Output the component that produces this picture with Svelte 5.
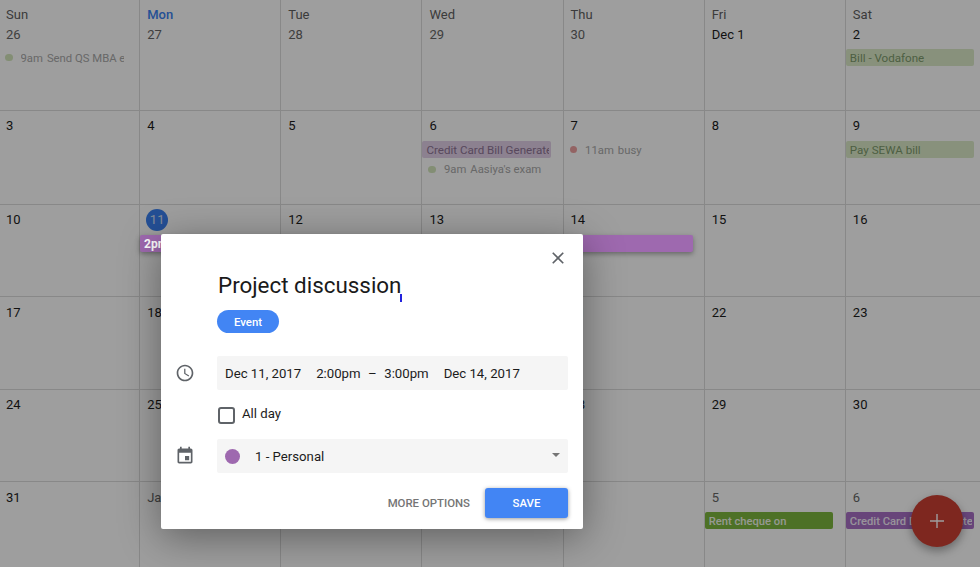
<script>
	const weekdays = ['Sun', 'Mon', 'Tue', 'Wed', 'Thu', 'Fri', 'Sat'];

	// label, muted (other month), events
	const weeks = [
		[
			{ n: '26', muted: true, events: [{ kind: 'dot', color: 'green', time: '9am', text: 'Send QS MBA essay' }] },
			{ n: '27', muted: true },
			{ n: '28', muted: true },
			{ n: '29', muted: true },
			{ n: '30', muted: true },
			{ n: 'Dec 1' },
			{ n: '2', events: [{ kind: 'chip', color: 'green', text: 'Bill - Vodafone' }] }
		],
		[
			{ n: '3' },
			{ n: '4' },
			{ n: '5' },
			{ n: '6', events: [
				{ kind: 'chip', color: 'purple', text: 'Credit Card Bill Generated' },
				{ kind: 'dot', color: 'green', time: '9am', text: "Aasiya's exam" }
			] },
			{ n: '7', events: [{ kind: 'dot', color: 'red', time: '11am', text: 'busy' }] },
			{ n: '8' },
			{ n: '9', events: [{ kind: 'chip', color: 'green', text: 'Pay SEWA bill' }] }
		],
		[
			{ n: '10' },
			{ n: '11', today: true },
			{ n: '12' },
			{ n: '13' },
			{ n: '14' },
			{ n: '15' },
			{ n: '16' }
		],
		[
			{ n: '17' },
			{ n: '18' },
			{ n: '19' },
			{ n: '20' },
			{ n: '21' },
			{ n: '22' },
			{ n: '23' }
		],
		[
			{ n: '24' },
			{ n: '25' },
			{ n: '26' },
			{ n: '27' },
			{ n: '28' },
			{ n: '29' },
			{ n: '30' }
		],
		[
			{ n: '31' },
			{ n: 'Jan 1', muted: true },
			{ n: '2', muted: true },
			{ n: '3', muted: true },
			{ n: '4', muted: true },
			{ n: '5', muted: true, events: [{ kind: 'chip', color: 'solid-green', text: 'Rent cheque on' }] },
			{ n: '6', muted: true, events: [{ kind: 'chip', color: 'solid-purple', text: 'Credit Card Bill Generated' }] }
		]
	];
</script>

<div class="page">
	<div class="month">
		{#each weeks as week, w}
			<div class="week" class:first={w === 0}>
				{#each week as day, d}
					<div class="day">
						{#if w === 0}
							<div class="weekday" class:current={d === 1}>{weekdays[d]}</div>
						{/if}
						<div class="date" class:muted={day.muted}>
							{#if day.today}
								<span class="today">{day.n}</span>
							{:else}
								{day.n}
							{/if}
						</div>
						{#each day.events ?? [] as ev}
							{#if ev.kind === 'chip'}
								<div class="chip {ev.color}"><span>{ev.text}</span></div>
							{:else}
								<div class="dot-event">
									<i class="dot {ev.color}"></i>
									<span><b>{ev.time}</b>{ev.text}</span>
								</div>
							{/if}
						{/each}
					</div>
				{/each}
			</div>
		{/each}
	</div>

	<button class="fab" aria-label="Create">
		<svg viewBox="0 0 24 24" width="24" height="24"><path d="M19 12.7h-6.3V19h-1.4v-6.3H5v-1.4h6.3V5h1.4v6.3H19v1.4z" /></svg>
	</button>

	<div class="scrim"></div>

	<div class="dragged">2pm Project discussion</div>

	<div class="modal">
		<button class="close" aria-label="Close">
			<svg viewBox="0 0 24 24" width="20" height="20"><path d="M19 6.41L17.59 5 12 10.59 6.41 5 5 6.41 10.59 12 5 17.59 6.41 19 12 13.41 17.59 19 19 17.59 13.41 12z" /></svg>
		</button>

		<div class="title"><span>Project discussion</span><i class="caret"></i></div>
		<div class="pill">Event</div>

		<div class="row">
			<svg class="icon" viewBox="0 0 24 24" width="20" height="20"><path d="M11.99 2C6.47 2 2 6.48 2 12s4.47 10 9.99 10C17.52 22 22 17.52 22 12S17.52 2 11.99 2zM12 20c-4.42 0-8-3.58-8-8s3.58-8 8-8 8 3.58 8 8-3.58 8-8 8zm.5-13H11v6l5.25 3.15.75-1.23-4.5-2.67z" /></svg>
			<div class="field when">
				<span>Dec 11, 2017</span>
				<span class="range"><span>2:00pm</span><span>–</span><span>3:00pm</span></span>
				<span>Dec 14, 2017</span>
			</div>
		</div>

		<label class="allday">
			<span class="box"></span>
			<span class="allday-text">All day</span>
		</label>

		<div class="row">
			<svg class="icon" viewBox="0 0 24 24" width="20" height="20"><path d="M17 12h-5v5h5v-5zM16 1v2H8V1H6v2H5c-1.11 0-1.99.9-1.99 2L3 19c0 1.1.89 2 2 2h14c1.1 0 2-.9 2-2V5c0-1.1-.9-2-2-2h-1V1h-2zm3 18H5V8h14v11z" /></svg>
			<div class="field cal">
				<i class="cal-dot"></i>
				<span class="cal-name">1 - Personal</span>
				<i class="arrow"></i>
			</div>
		</div>

		<div class="actions">
			<button class="more">MORE OPTIONS</button>
			<button class="save">SAVE</button>
		</div>
	</div>
</div>

<style>
	:global(body) {
		margin: 0;
		background: #fff;
	}
	.page {
		position: relative;
		width: 980px;
		height: 567px;
		overflow: hidden;
		font-family: Roboto, "Liberation Sans", sans-serif;
		color: #1c1c1c;
	}
	.month {
		margin-left: -1px;
		width: 992px;
	}
	.week {
		display: grid;
		grid-template-columns: repeat(7, 141.15px);
		height: 92px;
		border-bottom: 1px solid #dcdcdc;
	}
	.week.first {
		height: 110px;
	}
	.week:nth-child(2) {
		height: 93px;
	}
	.week:nth-child(3),
	.week:nth-child(5) {
		height: 91px;
	}
	.day {
		border-right: 1px solid #dcdcdc;
		box-sizing: border-box;
		padding-top: 6px;
		min-width: 0;
		overflow: hidden;
	}
	.week:nth-child(4) .day,
	.week:nth-child(6) .day {
		padding-top: 7px;
	}
	.week.first .day {
		padding-top: 7px;
	}
	.weekday {
		font-size: 13px;
		line-height: 16px;
		padding-left: 7px;
		height: 19px;
		color: #5f5f5f;
	}
	.weekday.current {
		color: #3b82f0;
		font-weight: 500;
	}
	.date {
		font-size: 13px;
		line-height: 18px;
		height: 18px;
		padding-left: 7px;
		color: #1c1c1c;
	}
	.week.first .date {
		height: 17px;
	}
	.date.muted {
		color: #666;
	}
	.today {
		display: inline-flex;
		align-items: center;
		justify-content: center;
		width: 22px;
		height: 22px;
		margin: -2px 0 0 -1px;
		border-radius: 50%;
		background: #3a80f0;
		color: #d5e0f5;
	}
	.chip {
		margin: 6px 12px 2px 0;
		height: 17px;
		line-height: 18px;
		font-size: 11.6px;
		border-radius: 2px;
		padding: 0 2px 0 4px;
		overflow: hidden;
		white-space: nowrap;
	}
	.week:nth-child(6) .chip {
		margin-top: 5px;
		line-height: 19px;
	}
	.chip span {
		display: block;
		overflow: hidden;
	}
	.chip.green {
		background: #dcebc9;
		color: #7d9a6c;
	}
	.chip.purple {
		background: #e2d0e8;
		color: #8e7596;
	}
	.chip.solid-green,
	.chip.solid-purple {
		font-size: 11.2px;
		font-weight: 500;
		box-shadow: 0 0 0 1px #fff;
	}
	.chip.solid-green {
		background: #7cb63e;
		color: #f2f7ea;
	}
	.chip.solid-purple {
		background: #a870c6;
		color: #f5eef9;
	}
	.dot-event {
		display: flex;
		align-items: center;
		height: 19px;
		margin: 5px 12px 0 6px;
		font-size: 11.3px;
		color: #a8a8a8;
		white-space: nowrap;
	}
	.chip + .dot-event {
		margin-top: 0;
	}
	.dot-event span {
		overflow: hidden;
		flex: 1;
		min-width: 0;
		margin-left: 8px;
		margin-right: 3px;
		padding-top: 1px;
	}
	.chip + .dot-event span {
		padding-top: 0;
	}
	.dot-event b {
		font-weight: 400;
		margin-right: 4px;
	}
	.dot {
		flex: none;
		width: 7.5px;
		height: 7.5px;
		border-radius: 50%;
	}
	.dot.green {
		background: #d3e6bc;
	}
	.dot.red {
		background: #eea1a1;
	}
	.fab {
		position: absolute;
		left: 911px;
		top: 495px;
		width: 52px;
		height: 52px;
		border: 0;
		padding: 0;
		border-radius: 50%;
		background: #cc3f33;
		display: flex;
		align-items: center;
		justify-content: center;
		box-shadow: 0 4px 10px rgba(0, 0, 0, .35);
	}
	.fab svg {
		fill: #fff;
	}
	.scrim {
		position: absolute;
		inset: 0;
		background: rgba(0, 0, 0, .38);
	}
	.dragged {
		position: absolute;
		left: 140px;
		top: 235px;
		width: 549px;
		height: 17px;
		padding-left: 4px;
		line-height: 18px;
		font-size: 12px;
		font-weight: 700;
		color: #fff;
		background: #9e69af;
		border-radius: 2px;
		box-shadow: 0 2px 5px rgba(0, 0, 0, .35);
	}
	.modal {
		position: absolute;
		left: 161px;
		top: 234px;
		width: 422px;
		height: 295px;
		box-sizing: border-box;
		padding: 36px 15px 0 56px;
		background: #fff;
		border-radius: 2px;
		box-shadow: 0 8px 40px rgba(0, 0, 0, .4);
		color: #1c1c1c;
	}
	.close {
		position: absolute;
		right: 15px;
		top: 14px;
		width: 20px;
		height: 20px;
		border: 0;
		padding: 0;
		background: none;
	}
	.close svg {
		display: block;
		fill: #5f6368;
	}
	.title {
		display: flex;
		font-size: 22.4px;
		line-height: 30px;
		padding-left: 1px;
		height: 40px;
		color: #1a1a1a;
	}
	.caret {
		width: 2px;
		height: 8px;
		margin-top: 24px;
		margin-left: -1px;
		background: #2222dd;
	}
	.pill {
		width: 62px;
		height: 23px;
		line-height: 24px;
		text-align: center;
		font-size: 11.4px;
		font-weight: 500;
		color: #fff;
		background: #4285f4;
		border-radius: 12px;
	}
	.row {
		display: flex;
		align-items: center;
		position: relative;
	}
	.icon {
		position: absolute;
		left: -42px;
		top: 7px;
		fill: #5f6368;
	}
	.field {
		width: 100%;
		height: 34px;
		display: flex;
		align-items: center;
		background: #f5f5f5;
		border-radius: 2px;
		font-size: 13.2px;
	}
	.when {
		margin-top: 23px;
		padding-left: 8px;
		gap: 15px;
	}
	.row:has(.when) .icon {
		top: 30px;
	}
	.range {
		display: flex;
		gap: 7.5px;
	}
	.allday {
		display: flex;
		align-items: center;
		gap: 7px;
		height: 16px;
		margin: 17px 0 16px 0;
		font-size: 13.2px;
	}
	.allday-text {
		margin-top: -3px;
	}
	.box {
		width: 13px;
		height: 13px;
		margin-left: 1px;
		border: 2px solid #5f6368;
		border-radius: 3px;
	}
	.cal {
		padding-left: 8px;
		position: relative;
	}
	.cal-dot {
		width: 15px;
		height: 15px;
		border-radius: 50%;
		background: #9e69af;
	}
	.cal-name {
		margin-left: 15px;
	}
	.arrow {
		position: absolute;
		right: 8px;
		top: 14px;
		border: 4px solid transparent;
		border-top: 4px solid #757575;
		border-bottom: 0;
	}
	.actions {
		display: flex;
		justify-content: flex-end;
		align-items: center;
		gap: 15px;
		margin-top: 15px;
	}
	.actions button {
		border: 0;
		font-family: inherit;
		font-size: 11.4px;
		font-weight: 500;
		padding: 0;
	}
	.more {
		background: none;
		color: #757575;
	}
	.save {
		width: 83px;
		height: 30px;
		background: #4285f4;
		color: #fff;
		border-radius: 3px;
		box-shadow: 0 1px 4px rgba(0, 0, 0, .4);
	}
</style>
